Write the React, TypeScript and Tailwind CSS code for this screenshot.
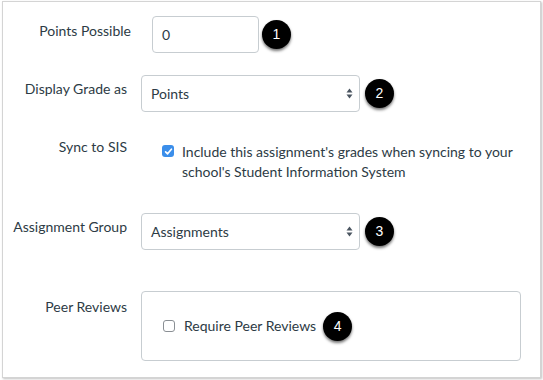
import React from 'react';

const Badge: React.FC<{ n: number; className?: string }> = ({ n, className = '' }) => (
  <span
    className={`inline-flex h-[29px] w-[29px] shrink-0 items-center justify-center rounded-full bg-black text-[14px] text-white shadow-[0_2px_3px_rgba(0,0,0,0.55)] ${className}`}
    style={{ fontFamily: '"Liberation Sans", Arial, sans-serif' }}
  >
    {n}
  </span>
);

const Arrows = () => (
  <svg width="7" height="11" viewBox="0 0 7 11" aria-hidden="true">
    <path d="M3.5 0.5 L6.5 4.5 H0.5 Z" fill="#4a5560" />
    <path d="M3.5 10.5 L6.5 6.5 H0.5 Z" fill="#4a5560" />
  </svg>
);

const Select: React.FC<{ value: string }> = ({ value }) => (
  <div className="flex h-[37px] w-[219px] items-center justify-between rounded-[4px] border border-[#c7cdd1] bg-white pl-[9px] pr-[6px] text-[14px] text-[#2d3b45]">
    <span>{value}</span>
    <Arrows />
  </div>
);

export default function App() {
  return (
    <div className="h-[380px] w-[543px] bg-white pl-[2px] pt-[1px]" style={{ fontFamily: 'Lato, "Noto Sans", sans-serif' }}>
      <div className="h-[377px] w-[539px] border border-[#d4d4d4] shadow-[1px_1px_2px_rgba(0,0,0,0.25)] text-[14px] text-[#2d3b45]">
        {/* Points Possible */}
        <div className="mt-[14px] flex">
          <div className="w-[128px] pt-[5px] text-right leading-[20px]">Points Possible</div>
          <div className="ml-[21px] flex items-center">
            <div className="flex h-[37px] w-[107px] items-center rounded-[4px] border border-[#c7cdd1] bg-white pl-[9px]">0</div>
            <Badge n={1} className="ml-[3px]" />
          </div>
        </div>

        {/* Display Grade as */}
        <div className="mt-[22px] flex">
          <div className="w-[124px] pt-[4px] text-right leading-[20px]">Display Grade as</div>
          <div className="ml-[14px] flex items-center">
            <Select value="Points" />
            <Badge n={2} className="ml-[5px]" />
          </div>
        </div>

        {/* Sync to SIS */}
        <div className="mt-[25px] flex">
          <div className="w-[124px] text-right leading-[20px]">Sync to SIS</div>
          <div className="ml-[35px] flex">
            <span className="mt-[8px] flex h-[12px] w-[12px] shrink-0 items-center justify-center rounded-[3px] bg-[#3b8eea]">
              <svg width="9" height="9" viewBox="0 0 9 9" aria-hidden="true">
                <path d="M1.6 4.8 L3.6 6.8 L7.4 2.2" fill="none" stroke="white" strokeWidth="1.7" strokeLinecap="round" strokeLinejoin="round" />
              </svg>
            </span>
            <p className="ml-[8px] mt-[5px] w-[345px] leading-[20px]">
              Include this assignment's grades when syncing to your school's Student Information System
            </p>
          </div>
        </div>

        {/* Assignment Group */}
        <div className="mt-[31px] flex">
          <div className="w-[124px] pt-[4px] text-right leading-[20px]">Assignment Group</div>
          <div className="ml-[14px] flex items-center">
            <Select value="Assignments" />
            <Badge n={3} className="ml-[5px]" />
          </div>
        </div>

        {/* Peer Reviews */}
        <div className="mt-[41px] flex">
          <div className="w-[124px] pt-[6px] text-right leading-[20px]">Peer Reviews</div>
          <div className="ml-[14px] flex h-[70px] w-[380px] items-center rounded-[4px] border border-[#c7cdd1] pl-[21px]">
            <span className="h-[12px] w-[12px] shrink-0 rounded-[3px] border border-[#8a8f94] bg-white" />
            <span className="ml-[9px] leading-[20px]">Require Peer Reviews</span>
            <Badge n={4} className="ml-[7px]" />
          </div>
        </div>
      </div>
    </div>
  );
}
